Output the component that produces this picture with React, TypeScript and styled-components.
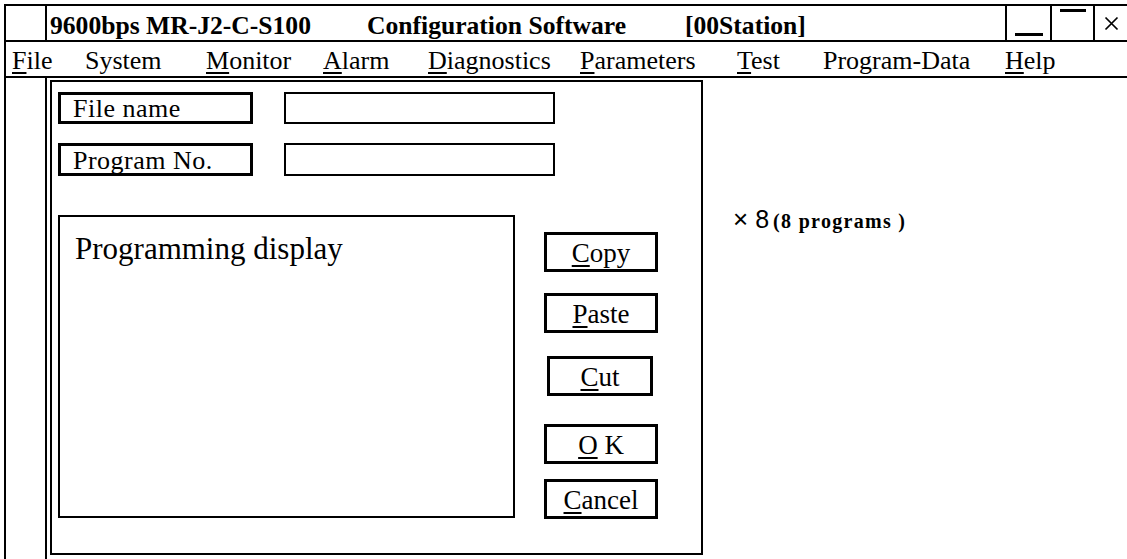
import type { FC } from 'react'
import styled, { createGlobalStyle } from 'styled-components'

const GlobalStyle = createGlobalStyle`
  html, body {
    margin: 0;
    padding: 0;
    background: #fff;
  }
  body {
    font-family: 'Liberation Serif', 'Times New Roman', serif;
    color: #000;
  }
`

const MENU = [
  { label: 'File', key: 'F', w: 73 },
  { label: 'System', key: '', w: 121 },
  { label: 'Monitor', key: 'M', w: 117 },
  { label: 'Alarm', key: 'A', w: 105 },
  { label: 'Diagnostics', key: 'D', w: 152 },
  { label: 'Parameters', key: 'P', w: 157 },
  { label: 'Test', key: 'T', w: 86 },
  { label: 'Program-Data', key: '', w: 182 },
  { label: 'Help', key: 'H', w: 0 }
]

const ACTIONS = [
  { label: 'Copy', key: 'C', top: 0, narrow: false },
  { label: 'Paste', key: 'P', top: 21, narrow: false },
  { label: 'Cut', key: 'C', top: 23, narrow: true },
  { label: 'O K', key: 'O', top: 28, narrow: false },
  { label: 'Cancel', key: 'C', top: 15, narrow: false }
]

// underline the first letter when it is the mnemonic
const Mnemonic: FC<{ label: string; hotkey: string }> = ({ label, hotkey }) =>
  hotkey && label.startsWith(hotkey) ? (
    <>
      <Key>{hotkey}</Key>
      {label.slice(hotkey.length)}
    </>
  ) : (
    <>{label}</>
  )

const App: FC = () => {
  return (
    <Screen>
      <GlobalStyle />
      <Window>
        <TitleBar>
          <SysBox />
          <TitleSeg $w={317} $lead={3}>
            9600bps MR-J2-C-S100
          </TitleSeg>
          <TitleSeg $w={318}>Configuration Software</TitleSeg>
          <TitleSeg>[00Station]</TitleSeg>
          <CtrlButton $w={45}>
            <Bar $at="bottom" />
          </CtrlButton>
          <CtrlButton $w={43}>
            <Bar $at="top" />
          </CtrlButton>
          <CtrlButton $w={34}>
            <svg width="15" height="15" viewBox="0 0 15 15">
              <path d="M1.5 1.5 L13.5 13.5 M13.5 1.5 L1.5 13.5" stroke="#000" strokeWidth="1.7" fill="none" />
            </svg>
          </CtrlButton>
        </TitleBar>

        <MenuBar>
          {MENU.map((m) => (
            <MenuItem key={m.label} $w={m.w}>
              <Mnemonic label={m.label} hotkey={m.key} />
            </MenuItem>
          ))}
        </MenuBar>

        <Body>
          <Side />
          <DialogSlot>
            <Dialog>
              <FieldRow>
                <LabelBox>File name</LabelBox>
                <InputBox />
              </FieldRow>
              <FieldRow $gapTop={19} $h={33}>
                <LabelBox>Program No.</LabelBox>
                <InputBox />
              </FieldRow>
              <Lower>
                <ProgBox>Programming display</ProgBox>
                <ButtonColumn>
                  {ACTIONS.map((a) => (
                    <ActionButton key={a.label} $top={a.top} $narrow={a.narrow}>
                      <Mnemonic label={a.label} hotkey={a.key} />
                    </ActionButton>
                  ))}
                </ButtonColumn>
              </Lower>
            </Dialog>
          </DialogSlot>
          <Note>
            <Times>×</Times>
            <Count>8</Count>
            <NoteText>(8 programs )</NoteText>
          </Note>
        </Body>
      </Window>
    </Screen>
  )
}

const Screen = styled.div`
  width: 1127px;
  height: 559px;
  overflow: hidden;
  background: #fff;
  padding: 4px 0 0 4px;
  box-sizing: border-box;
`

const Window = styled.div`
  height: 100%;
  display: flex;
  flex-direction: column;
  border-top: 2px solid #000;
  border-left: 2px solid #000;
`

const TitleBar = styled.div`
  display: flex;
  height: 36px;
  box-sizing: border-box;
  border-bottom: 2px solid #000;
  flex-shrink: 0;
`

const SysBox = styled.div`
  width: 41px;
  box-sizing: border-box;
  border-right: 2px solid #000;
`

const TitleSeg = styled.div<{ $w?: number; $lead?: number }>`
  ${(p) => (p.$w ? `width: ${p.$w}px; flex-shrink: 0;` : 'flex: 1;')}
  margin-left: ${(p) => p.$lead ?? 0}px;
  font-size: 25.6px;
  font-weight: bold;
  line-height: 34px;
  padding-top: 3px;
  white-space: nowrap;
`

const CtrlButton = styled.div<{ $w: number }>`
  position: relative;
  width: ${(p) => p.$w}px;
  box-sizing: border-box;
  border-left: 2px solid #000;
  display: flex;
  align-items: center;
  justify-content: center;
`

const Bar = styled.span<{ $at: 'top' | 'bottom' }>`
  position: absolute;
  left: 8px;
  right: 7px;
  height: 3px;
  background: #000;
  ${(p) => (p.$at === 'top' ? 'top: 3px;' : 'bottom: 4px;')}
`

const MenuBar = styled.div`
  display: flex;
  height: 36px;
  box-sizing: border-box;
  border-bottom: 2px solid #000;
  padding-left: 6px;
  flex-shrink: 0;
`

const MenuItem = styled.div<{ $w: number }>`
  ${(p) => (p.$w ? `width: ${p.$w}px; flex-shrink: 0;` : 'flex: 1;')}
  font-size: 26px;
  line-height: 34px;
  padding-top: 2px;
  white-space: nowrap;
`

const Key = styled.span`
  text-decoration: underline;
  text-decoration-thickness: 2px;
  text-underline-offset: 3px;
`

const Body = styled.div`
  flex: 1;
  display: flex;
  min-height: 0;
`

const Side = styled.div`
  width: 41px;
  box-sizing: border-box;
  border-right: 2px solid #000;
  flex-shrink: 0;
`

const DialogSlot = styled.div`
  padding: 2px 0 0 3px;
  flex-shrink: 0;
`

const Dialog = styled.div`
  width: 653px;
  height: 475px;
  box-sizing: border-box;
  border: 2px solid #000;
  padding: 10px 0 0 6px;
`

const FieldRow = styled.div<{ $gapTop?: number; $h?: number }>`
  display: flex;
  gap: 31px;
  height: ${(p) => p.$h ?? 32}px;
  margin-top: ${(p) => p.$gapTop ?? 0}px;
`

const LabelBox = styled.div`
  width: 195px;
  box-sizing: border-box;
  border: 3px solid #000;
  padding-left: 12px;
  font-size: 26px;
  letter-spacing: 0.5px;
  display: flex;
  align-items: center;
  padding-top: 2px;
`

const InputBox = styled.div`
  width: 271px;
  box-sizing: border-box;
  border: 2px solid #000;
`

const Lower = styled.div`
  display: flex;
  margin-top: 39px;
`

const ProgBox = styled.div`
  width: 457px;
  height: 303px;
  box-sizing: border-box;
  border: 2px solid #000;
  padding: 17px 0 0 15px;
  font-size: 31px;
  line-height: 30px;
`

const ButtonColumn = styled.div`
  display: flex;
  flex-direction: column;
  margin-left: 29px;
  padding-top: 17px;
`

const ActionButton = styled.div<{ $top: number; $narrow: boolean }>`
  width: ${(p) => (p.$narrow ? 106 : 114)}px;
  height: 40px;
  margin-top: ${(p) => p.$top}px;
  margin-left: ${(p) => (p.$narrow ? 3 : 0)}px;
  box-sizing: border-box;
  border: 3px solid #000;
  display: flex;
  align-items: center;
  justify-content: center;
  font-size: 27px;
  padding-top: 2px;
  white-space: pre;
`

const Note = styled.div`
  padding: 126px 0 0 30px;
  display: flex;
  align-items: baseline;
  white-space: nowrap;
`

const Times = styled.span`
  font-family: 'Liberation Sans', Arial, sans-serif;
  font-size: 26px;
`

const Count = styled.span`
  font-family: 'Liberation Sans', Arial, sans-serif;
  font-size: 25px;
  margin: 0 4px 0 7px;
`

const NoteText = styled.span`
  font-size: 20px;
  font-weight: bold;
  letter-spacing: 1.3px;
`

export default App
